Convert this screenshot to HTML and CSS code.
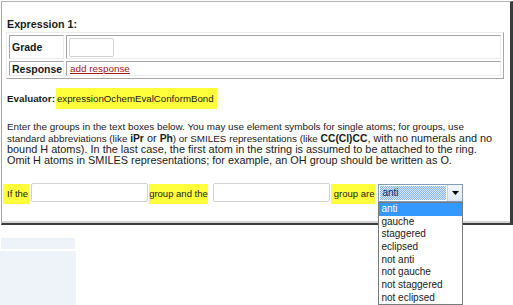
FILE: index.html
```html
<!DOCTYPE html>
<html lang="en">
<head>
  <meta charset="UTF-8" />
  <title>Expression Evaluator</title>
  <link rel="stylesheet" href="styles.css">
</head>
<body>
  <!-- Expression panel -->
  <div class="panel">
    <div class="expr-title">Expression 1:</div>
    <table class="expr-table">
      <tr>
        <th class="label-cell">Grade</th>
        <td class="value-cell"><input class="grade-input" type="text"></td>
      </tr>
      <tr>
        <th class="label-cell">Response</th>
        <td class="value-cell"><a href="#" class="add-link">add response</a></td>
      </tr>
    </table>

    <div class="evaluator">
      <b class="eval-label">Evaluator:</b>
      <span class="hl hl-eval">expressionOchemEvalConformBond</span>
    </div>

    <p class="instructions">
      <span class="sm">Enter the groups in the text boxes below. You may use element symbols for single atoms; for groups, use</span><br>
      <span class="sm">standard abbreviations (like </span><b>iPr</b> or <b>Ph</b><span class="sm">) or SMILES representations (like </span><b>CC(Cl)CC</b>, with no numerals and no<br>
      bound H atoms). In the last case, the first atom in the string is assumed to be attached to the ring.<br>
      Omit H atoms in SMILES representations; for example, an OH group should be written as O.
    </p>

    <div class="answer-row">
      <span class="hl hl-if">If the</span>
      <input class="group-input first" type="text">
      <span class="hl hl-and">group and the</span>
      <input class="group-input second" type="text">
      <span class="hl hl-are">group are</span>
      <div class="fake-select">
        <span class="select-value"><span class="select-text">anti</span></span>
        <span class="select-arrow">
          <svg width="7" height="4" viewBox="0 0 7 4"><path d="M0 0h7L3.5 4z" fill="#000"/></svg>
        </span>
        <!-- open option list -->
        <ul class="options">
          <li class="active">anti</li>
          <li>gauche</li>
          <li>staggered</li>
          <li>eclipsed</li>
          <li>not anti</li>
          <li>not gauche</li>
          <li>not staggered</li>
          <li>not eclipsed</li>
        </ul>
      </div>
    </div>
  </div>

  <!-- side navigation remnants -->
  <div class="side-bar"></div>
  <div class="side-block"></div>
</body>
</html>
```

FILE: styles.css
```css
/* ---------- Base ---------- */
* {
  box-sizing: border-box;
}
html, body {
  margin: 0;
  padding: 0;
  background: #ffffff;
  font-family: "Liberation Sans", Arial, sans-serif;
  font-size: 10px;
  color: #1a1a1a;
  overflow: hidden;
}

/* ---------- Panel ---------- */
.panel {
  margin: 1px 0 0 1px;
  width: 512px;
  border-top: 1px solid #b4b4b4;
  border-left: 1px solid #a8a8a8;
  border-right: 3px solid #3c3c3c;
  border-bottom: 2px solid #3c3c3c;
  box-shadow: inset 0 -2px 0 #d4d4d4;
  padding: 16px 4px 19px 4px;
  position: relative;
}
.expr-title {
  font-weight: bold;
  font-size: 10.7px;
  line-height: 13px;
  padding-left: 1px;
}

/* ---------- Grade / Response table ---------- */
.expr-table {
  margin-top: 1px;
  width: 498px;
  border-collapse: separate;
  border-spacing: 2px;
  border: 1px solid;
  border-color: #ececec #a6a6a6 #a6a6a6 #ececec;
}
.label-cell,
.value-cell {
  border: 1px solid;
  border-color: #a6a6a6 #ececec #ececec #a6a6a6;
  vertical-align: middle;
}
.label-cell {
  width: 55px;
  text-align: left;
  font-size: 10.5px;
  font-weight: bold;
  padding: 0 0 0 2px;
}
.value-cell {
  padding: 0 0 0 2px;
}
.expr-table tr:first-child .label-cell,
.expr-table tr:first-child .value-cell {
  height: 24px;
}
.expr-table tr:last-child .label-cell,
.expr-table tr:last-child .value-cell {
  height: 15px;
}
.grade-input {
  display: block;
  width: 45px;
  height: 19px;
  border: 1px solid #d2d2d2;
  border-radius: 2px;
  margin: 0;
}
.add-link {
  color: #a01818;
  font-size: 9.9px;
  padding-left: 1px;
}

/* ---------- Highlights ---------- */
.hl {
  background: #ffff3c;
}

/* ---------- Evaluator ---------- */
.evaluator {
  margin-top: 9px;
  display: flex;
  align-items: center;
  padding-left: 1px;
}
.eval-label {
  font-size: 9.8px;
  margin-right: 1px;
}
.hl-eval {
  font-size: 9.7px;
  line-height: 11px;
  padding: 5px 3px 5px 1px;
}

/* ---------- Instructions ---------- */
.instructions {
  margin: 12px 0 0 0;
  padding-left: 1px;
  font-size: 10.9px;
  line-height: 10.7px;
  white-space: nowrap;
}
.instructions .sm {
  font-size: 9.85px;
}
.instructions b {
  font-size: 10.3px;
}

/* ---------- Answer row ---------- */
.answer-row {
  margin-top: 16px;
  display: flex;
  align-items: center;
  font-size: 9.5px;
}
.answer-row .hl {
  line-height: 20px;
  height: 20px;
  margin-top: 2px;
}
.hl-if {
  margin-left: -3px;
  padding: 0 1px 0 4px;
}
.hl-and {
  margin-left: 1px;
}
.hl-are {
  margin-left: 1px;
  padding: 0 1px 0 3px;
}
.group-input {
  width: 117px;
  height: 19px;
  margin: 0;
  border: 1px solid #d2d2d2;
  border-radius: 2px;
}
.group-input.first {
  margin-left: 2px;
}
.group-input.second {
  margin-left: 5px;
}

/* ---------- Drop-down ---------- */
.fake-select {
  position: relative;
  margin-left: 3px;
  width: 85px;
  height: 18px;
  border: 1px solid #7f9db9;
  display: flex;
  align-items: stretch;
  background: #fff;
}
.select-value {
  flex: 1;
  margin: 1px;
  background-image: repeating-conic-gradient(#86b4ec 0 25%, #dbe9fb 0 50%);
  background-size: 2px 2px;
  display: flex;
  align-items: center;
}
.select-text {
  color: #0a246a;
  font-size: 10px;
  padding-left: 2px;
}
.select-arrow {
  width: 15px;
  border-left: 1px solid #c5d2e3;
  background: linear-gradient(#f4f7fb, #dde6f1);
  display: flex;
  align-items: center;
  justify-content: center;
}
.options {
  position: absolute;
  top: 17px;
  left: -1px;
  width: 85px;
  margin: 0;
  padding: 0;
  list-style: none;
  background: #fff;
  border: 1px solid #7a7a7a;
  z-index: 10;
}
.options li {
  font-size: 10px;
  line-height: 12.7px;
  height: 12.7px;
  padding-left: 2px;
  color: #1a1a1a;
}
.options li.active {
  background: #3399ff;
  color: #ffffff;
}

/* ---------- Light blue side elements ---------- */
.side-bar {
  margin: 13px 0 0 1px;
  width: 74px;
  height: 11px;
  background: #eef3fa;
}
.side-block {
  margin-top: 2px;
  width: 76px;
  height: 60px;
  background: #eef2f9;
}
```
